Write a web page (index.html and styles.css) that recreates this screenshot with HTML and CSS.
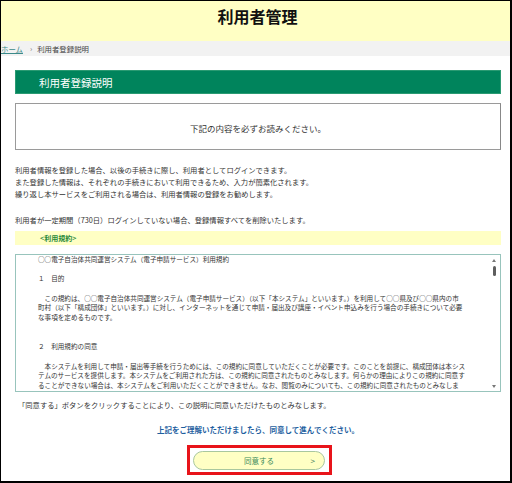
FILE: index.html
```html
<!DOCTYPE html>
<html lang="ja">
<head>
<meta charset="utf-8">
<title>利用者管理</title>
<link rel="stylesheet" href="styles.css">
</head>
<body>
<div class="frame">
  <header class="site-header">
    <h1 class="site-title">利用者管理</h1>
  </header>
  <nav class="breadcrumb">
    <a href="#" class="crumb-link">ホーム</a>
    <span class="crumb-sep">›</span>
    <span class="crumb-current">利用者登録説明</span>
  </nav>
  <main class="main">
    <h2 class="page-title">利用者登録説明</h2>
    <div class="notice-box">下記の内容を必ずお読みください。</div>
    <p class="lead">利用者情報を登録した場合、以後の手続きに際し、利用者としてログインできます。<br>また登録した情報は、それぞれの手続きにおいて利用できるため、入力が簡素化されます。<br>繰り返し本サービスをご利用される場合は、利用者情報の登録をお勧めします。</p>
    <p class="lead lead-2">利用者が一定期間（730日）ログインしていない場合、登録情報すべてを削除いたします。</p>
    <div class="terms-label">&lt;利用規約&gt;</div>
    <div class="terms-box">
      <div class="terms-text">
        <p class="t-line">○○電子自治体共同運営システム（電子申請サービス）利用規約</p>
        <p class="t-line t-gap">１　目的</p>
        <p class="t-line t-gap t-para">　この規約は、○○電子自治体共同運営システム（電子申請サービス）（以下「本システム」といいます。）を利用して○○県及び○○県内の市<br>町村（以下「構成団体」といいます。）に対し、インターネットを通じて申請・届出及び講座・イベント申込みを行う場合の手続きについて必要<br>な事項を定めるものです。</p>
        <p class="t-line t-gap2">２　利用規約の同意</p>
        <p class="t-line t-gap">　本システムを利用して申請・届出等手続を行うためには、この規約に同意していただくことが必要です。このことを前提に、構成団体は本シス<br>テムのサービスを提供します。本システムをご利用された方は、この規約に同意されたものとみなします。何らかの理由によりこの規約に同意す<br>ることができない場合は、本システムをご利用いただくことができません。なお、閲覧のみについても、この規約に同意されたものとみなしま<br>す。</p>
      </div>
      <div class="scrollbar">
        <span class="sb-arrow sb-up"></span>
        <span class="sb-thumb"></span>
        <span class="sb-track"></span>
        <span class="sb-arrow sb-down"></span>
      </div>
    </div>
    <p class="agree-note">「同意する」ボタンをクリックすることにより、この説明に同意いただけたものとみなします。</p>
    <p class="proceed">上記をご理解いただけましたら、同意して進んでください。</p>
    <div class="btn-wrap">
      <div class="highlight">
        <button class="agree-btn" type="button"><span class="btn-label">同意する</span><span class="btn-arrow">&gt;</span></button>
      </div>
    </div>
  </main>
</div>
</body>
</html>
```
FILE: styles.css
```css
* { box-sizing: border-box; }
html, body { margin: 0; padding: 0; background: #fff; }
body {
  font-family: "Noto Sans CJK JP", "Noto Sans", sans-serif;
  color: #333;
}
.frame {
  width: 512px;
  height: 483px;
  border-style: solid;
  border-color: #000;
  border-width: 1px 2px 2px 1px;
  overflow: hidden;
  background: #fff;
}
.site-header {
  background: #ffffc4;
  height: 40px;
  padding-top: 5px;
}
.site-title {
  margin: 0;
  text-align: center;
  font-size: 16px;
  line-height: 20px;
  font-weight: 700;
  color: #111;
  padding-left: 4px;
}
.breadcrumb {
  background: #f2f2f2;
  height: 15px;
  line-height: 15px;
  font-size: 7.4px;
  color: #444;
  display: flex;
  align-items: center;
}
.crumb-link { color: #3a8a8a; text-decoration: underline; }
.crumb-sep { margin: 0 5px 0 7px; color: #777; }
.main {
  padding: 0 9px 0 14px;
}
.page-title {
  margin: 14px 0 0;
  height: 24px;
  line-height: 24px;
  background: #00845c;
  color: #fff;
  font-size: 10.5px;
  font-weight: 400;
  padding-left: 23px;
  border: 1px solid #2a9a72;
}
.notice-box {
  margin-top: 9px;
  height: 47px;
  border: 1px solid #9a9a9a;
  border-right-color: #888;
  text-align: center;
  font-size: 8.5px;
  line-height: 12px;
  padding-top: 18px;
  color: #333;
}
.lead {
  margin: 14px 0 0;
  font-size: 7.3px;
  line-height: 12px;
  color: #333;
}
.lead-2 { margin-top: 14px; }
.terms-label {
  margin-top: 5px;
  height: 14px;
  line-height: 14px;
  background: #ffffc4;
  color: #2a8a3a;
  font-size: 7px;
  font-weight: 700;
  padding-left: 25px;
}
.terms-box {
  margin-top: 9px;
  height: 138px;
  border: 1px solid #98c4bc;
  display: flex;
  overflow: hidden;
}
.terms-text {
  flex: 1;
  overflow: hidden;
  padding: 0 0 0 22px;
  font-size: 6.6px;
  line-height: 9.7px;
  color: #333;
}
.t-line { margin: 0; white-space: nowrap; }
.t-gap { margin-top: 9.7px; }
.t-gap2 { margin-top: 19.4px; }
.scrollbar {
  width: 12px;
  display: flex;
  flex-direction: column;
  align-items: center;
  padding: 4px 0 3px;
}
.sb-arrow {
  width: 0;
  height: 0;
  border-left: 2px solid transparent;
  border-right: 2px solid transparent;
}
.sb-up { border-bottom: 3px solid #777; }
.sb-down { border-top: 3px solid #777; }
.sb-thumb {
  margin-top: 4px;
  width: 3px;
  height: 10px;
  border-radius: 2px;
  background: #5e5e5e;
}
.sb-track { flex: 1; }
.agree-note {
  margin: 7px 0 0 3px;
  font-size: 7.3px;
  line-height: 12px;
  color: #333;
}
.proceed {
  margin: 13px 0 0;
  text-align: center;
  font-size: 7.5px;
  line-height: 12px;
  color: #1f5f9f;
  font-weight: 700;
}
.btn-wrap {
  margin-top: 9px;
  display: flex;
  justify-content: center;
  padding-left: 3px;
}
.highlight {
  border: 3px solid #e8141a;
  padding: 3px 4px 2px 3px;
}
.agree-btn {
  display: grid;
  grid-template-columns: 1fr auto 1fr;
  align-items: center;
  width: 132px;
  height: 19px;
  padding: 0 9px;
  border: 1px solid #a9c79e;
  border-radius: 10px;
  background: #ffffc4;
  font-family: inherit;
  font-size: 7.5px;
  color: #3a8a5a;
  cursor: pointer;
}
.btn-label { grid-column: 2; }
.btn-arrow {
  grid-column: 3;
  justify-self: end;
  font-size: 8px;
  color: #3a7a5a;
}
```
